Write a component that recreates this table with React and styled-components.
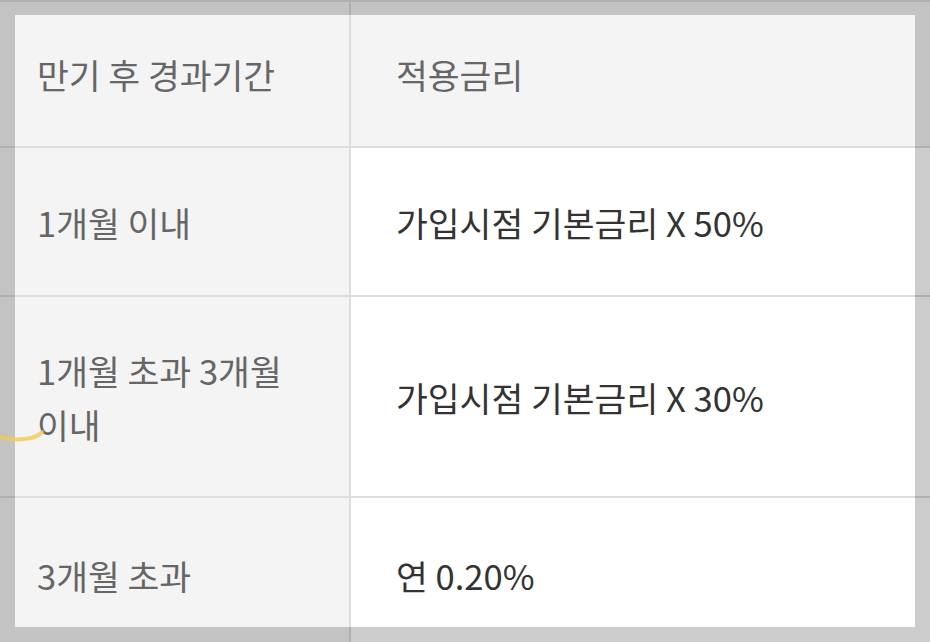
import React from "react";
import styled, { createGlobalStyle } from "styled-components";

const Global = createGlobalStyle`
  html, body { margin: 0; padding: 0; background: #ffffff; overflow: hidden; }
  body { font-family: "Noto Sans CJK KR", "Noto Sans", sans-serif; }
`;

const Page = styled.div`
  position: relative;
  width: 930px;
  height: 642px;
  overflow: hidden;
`;

const Table = styled.table`
  border-collapse: collapse;
  margin-left: -8px;
  width: 1000px;
  table-layout: fixed;
  font-size: 34.6px;
  line-height: 54px;
  word-break: keep-all;
`;

const Cell = styled.td`
  box-sizing: border-box;
  height: ${(p) => p.$h}px;
  padding: 0 40px 0 45px;
  vertical-align: middle;
  border: 2px solid #dddddd;
  border-left: none;
  background: ${(p) => (p.$shade ? "#f4f4f4" : "#ffffff")};
  color: ${(p) => (p.$muted ? "#666666" : "#333333")};
  font-weight: 400;
  text-align: left;
  &:last-child { border-right: none; }
`;

const Highlight = styled.div`
  position: absolute;
  left: 15px;
  top: 15px;
  width: 900px;
  height: 612px;
  box-shadow: 0 0 0 2000px rgba(0, 0, 0, 0.2);
  pointer-events: none;
`;

const Stroke = styled.svg`
  position: absolute;
  left: 0;
  top: 420px;
  width: 60px;
  height: 30px;
  pointer-events: none;
`;

const rows = [
  { h: 149, left: "1개월 이내", right: "가입시점 기본금리 X 50%" },
  { h: 201, left: "1개월 초과 3개월 이내", right: "가입시점 기본금리 X 30%" },
  { h: 156, left: "3개월 초과", right: "연 0.20%" },
];

export default function App() {
  return (
    <Page>
      <Global />
      <Table>
        <colgroup>
          <col style={{ width: "358px" }} />
          <col />
        </colgroup>
        <thead>
          <tr>
            <Cell as="th" $h={146} $shade $muted>만기 후 경과기간</Cell>
            <Cell as="th" $h={146} $shade $muted>적용금리</Cell>
          </tr>
        </thead>
        <tbody>
          {rows.map((r) => (
            <tr key={r.left}>
              <Cell $h={r.h} $shade $muted>{r.left}</Cell>
              <Cell $h={r.h}>{r.right}</Cell>
            </tr>
          ))}
        </tbody>
      </Table>
      <Highlight />
      <Stroke viewBox="0 0 60 30">
        <path
          d="M0 17 C 8 19, 16 20, 24 19 C 32 18, 38 17, 42 12"
          fill="none"
          stroke="#f0cc50"
          strokeWidth="4"
          strokeLinecap="round"
          opacity="0.8"
        />
      </Stroke>
    </Page>
  );
}
